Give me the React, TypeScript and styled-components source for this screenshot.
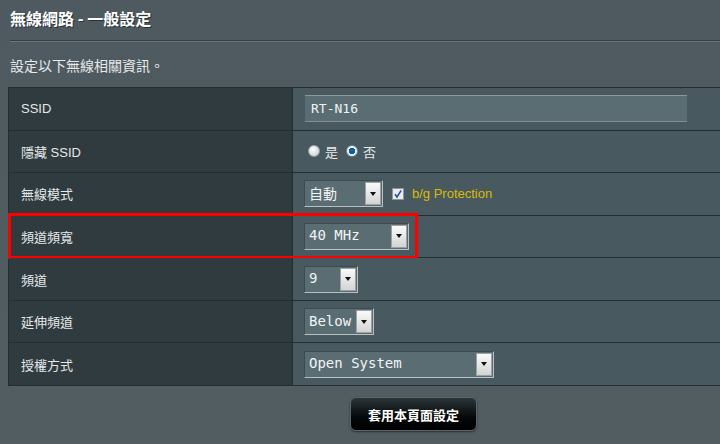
import React from "react";
import styled, { createGlobalStyle } from "styled-components";

const GlobalStyle = createGlobalStyle`
  html, body {
    margin: 0;
    padding: 0;
    background: #4e5a5f;
    overflow: hidden;
  }
  body {
    width: 720px;
    height: 444px;
    font-family: "Liberation Sans", Arial, "Noto Sans CJK TC", sans-serif;
  }
`;

const Page = styled.div`
  width: 720px;
  height: 444px;
  background: linear-gradient(#4e5a5f, #525d61);
  display: flex;
  flex-direction: column;
`;

const Title = styled.div`
  margin: 8px 0 0 10px;
  height: 20px;
  line-height: 20px;
  font-family: "Noto Sans CJK TC", sans-serif;
  font-weight: 700;
  font-size: 16px;
  color: #ffffff;
  text-shadow: 1px 1px 0 #2a3236;
`;

const Divider = styled.div`
  margin: 12px 0 0 10px;
  height: 1px;
  background: #364044;
  border-bottom: 1px solid #68757a;
`;

const Subtitle = styled.div`
  margin: 14px 0 0 10px;
  height: 18px;
  line-height: 18px;
  font-family: "Noto Sans CJK TC", sans-serif;
  font-size: 14px;
  color: #e6e9ea;
`;

const Table = styled.div`
  margin: 13px 0 0 8px;
  height: 298px;
  display: grid;
  grid-template-rows: repeat(7, 1fr);
  border-top: 1px solid #242d30;
  border-left: 1px solid #242d30;
`;

const Row = styled.div`
  position: relative;
  display: grid;
  grid-template-columns: 284px 1fr;
  border-bottom: 1px solid #242d30;
`;

const Label = styled.div`
  background: #2f3b3f;
  border-right: 1px solid #242d30;
  display: flex;
  align-items: center;
  padding-left: 12px;
  font-family: "Liberation Sans", Arial, "Noto Sans CJK TC", sans-serif;
  font-size: 13px;
  color: #e4e8e9;
`;

const Value = styled.div`
  background: #485a60;
  display: flex;
  align-items: center;
  padding-left: 11px;
  gap: 9px;
`;

const TextInput = styled.div`
  width: 376px;
  height: 25px;
  margin-left: 1px;
  padding-left: 6px;
  box-sizing: content-box;
  background: #5a6d73;
  border-top: 1px solid #8c999d;
  border-bottom: 1px solid #7f8d91;
  display: flex;
  align-items: center;
  font-family: "DejaVu Sans Mono", monospace;
  font-size: 13px;
  color: #f2f4f4;
`;

const Select = styled.div<{ $w: number }>`
  width: ${({ $w }) => $w}px;
  height: 27px;
  box-sizing: border-box;
  background: #5a6d73;
  border: 1px solid #3d4b50;
  border-right-color: #b8c0c2;
  border-bottom-color: #b8c0c2;
  display: flex;
  align-items: center;
  justify-content: space-between;
  padding: 0 0 2px 4px;
  font-family: "DejaVu Sans Mono", "Noto Sans CJK TC", monospace;
  font-size: 14px;
  color: #f2f4f4;
`;

const CjkText = styled.span`
  font-family: "Noto Sans CJK TC", sans-serif;
  font-size: 14px;
`;

const Arrow = styled.span`
  width: 16px;
  height: 23px;
  margin: 2px 1px 0 0;
  background: linear-gradient(#fafafa, #d2d4d4);
  border: 1px solid #9aa2a4;
  box-sizing: border-box;
  display: flex;
  align-items: center;
  justify-content: center;
  &::after {
    content: "";
    border-left: 3px solid transparent;
    border-right: 3px solid transparent;
    border-top: 4px solid #111;
  }
`;

const RadioGroup = styled.label`
  display: flex;
  align-items: center;
  gap: 5px;
  margin-left: -1px;
  font-family: "Noto Sans CJK TC", sans-serif;
  font-size: 13px;
  color: #e8ecec;
  &:first-child {
    margin-left: 4px;
  }
`;

const Radio = styled.span<{ $on?: boolean }>`
  width: 12px;
  height: 12px;
  border-radius: 50%;
  background: ${({ $on }) =>
    $on
      ? "radial-gradient(circle, #0f5f9c 0 3px, #eef2f4 3.5px)"
      : "radial-gradient(circle at 40% 35%, #ffffff, #c3c7c9)"};
  border: 1px solid ${({ $on }) => ($on ? "#6a8896" : "#9aa0a2")};
  box-sizing: border-box;
`;

const Check = styled.span`
  width: 12px;
  height: 12px;
  display: flex;
`;

const Yellow = styled.span`
  margin-left: -1px;
  font-family: "Liberation Sans", Arial, sans-serif;
  font-size: 13px;
  color: #dbba00;
`;

const Highlight = styled.div`
  position: absolute;
  left: -1px;
  top: -3px;
  width: 410px;
  height: 46px;
  box-sizing: border-box;
  border: 3px solid #ff0000;
  pointer-events: none;
`;

const Footer = styled.div`
  display: flex;
  justify-content: flex-start;
  padding: 11px 0 0 350px;
`;

const ApplyButton = styled.button`
  width: 127px;
  height: 34px;
  border-radius: 6px;
  border: 1px solid #5b6569;
  background: linear-gradient(#2a3539, #050808 60%, #000);
  box-shadow: 0 1px 2px rgba(0, 0, 0, 0.5);
  color: #ffffff;
  font-family: "Noto Sans CJK TC", sans-serif;
  font-weight: 700;
  font-size: 13px;
  cursor: pointer;
`;

function Dropdown({ w, children }: { w: number; children: React.ReactNode }) {
  return (
    <Select $w={w}>
      <span>{children}</span>
      <Arrow />
    </Select>
  );
}

export default function App() {
  return (
    <Page>
      <GlobalStyle />
      <Title>無線網路 - 一般設定</Title>
      <Divider />
      <Subtitle>設定以下無線相關資訊。</Subtitle>
      <Table>
        <Row>
          <Label>SSID</Label>
          <Value>
            <TextInput>RT-N16</TextInput>
          </Value>
        </Row>
        <Row>
          <Label>隱藏 SSID</Label>
          <Value>
            <RadioGroup>
              <Radio />是
            </RadioGroup>
            <RadioGroup>
              <Radio $on />否
            </RadioGroup>
          </Value>
        </Row>
        <Row>
          <Label>無線模式</Label>
          <Value>
            <Dropdown w={79}>
              <CjkText>自動</CjkText>
            </Dropdown>
            <Check>
              <svg width="12" height="12" viewBox="0 0 12 12">
                <rect x="0.5" y="0.5" width="11" height="11" fill="#e9ecee" stroke="#8d9599" />
                <path d="M3 6.2 L5 9 L9.2 2.4" fill="none" stroke="#2c4fa8" strokeWidth="1.6" />
              </svg>
            </Check>
            <Yellow>b/g Protection</Yellow>
          </Value>
        </Row>
        <Row>
          <Highlight />
          <Label>頻道頻寬</Label>
          <Value>
            <Dropdown w={105}>40 MHz</Dropdown>
          </Value>
        </Row>
        <Row>
          <Label>頻道</Label>
          <Value>
            <Dropdown w={54}>9</Dropdown>
          </Value>
        </Row>
        <Row>
          <Label>延伸頻道</Label>
          <Value>
            <Dropdown w={70}>Below</Dropdown>
          </Value>
        </Row>
        <Row>
          <Label>授權方式</Label>
          <Value>
            <Dropdown w={190}>Open System</Dropdown>
          </Value>
        </Row>
      </Table>
      <Footer>
        <ApplyButton>套用本頁面設定</ApplyButton>
      </Footer>
    </Page>
  );
}
